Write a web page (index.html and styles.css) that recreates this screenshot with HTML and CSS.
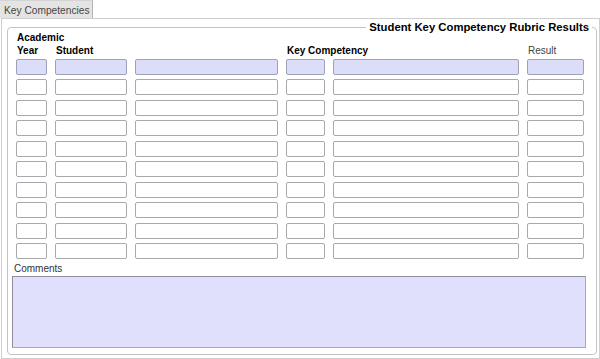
FILE: index.html
```html
<!DOCTYPE html>
<html lang="en">
<head>
    <meta charset="UTF-8">
    <title>Key Competencies</title>
    <link rel="stylesheet" href="styles.css">
</head>
<body>
    <div class="tabs">
        <div class="tab">Key Competencies</div>
    </div>
    <div class="panel">
        <fieldset class="results">
            <legend>Student Key Competency Rubric Results</legend>
            <div class="grid heads">
                <div class="head">Academic<br>Year</div>
                <div class="head">Student</div>
                <div></div>
                <div class="head wide">Key Competency</div>
                <div class="head plain">Result</div>
            </div>
            <div class="grid rows">
                <input class="filled"><input class="filled"><input class="filled"><input class="filled"><input class="filled"><input class="filled">
                <input><input><input><input><input><input>
                <input><input><input><input><input><input>
                <input><input><input><input><input><input>
                <input><input><input><input><input><input>
                <input><input><input><input><input><input>
                <input><input><input><input><input><input>
                <input><input><input><input><input><input>
                <input><input><input><input><input><input>
                <input><input><input><input><input><input>
            </div>
            <div class="label">Comments</div>
            <textarea class="comments"></textarea>
        </fieldset>
    </div>
</body>
</html>
```

FILE: styles.css
```css
body {
    margin: 0;
    font-family: "Liberation Sans", Arial, sans-serif;
    font-size: 10px;
    color: #000;
    background: #fff;
}
.tabs {
    display: flex;
    height: 18px;
}
.tab {
    box-sizing: border-box;
    width: 93px;
    height: 18px;
    padding: 2px 0 0 4px;
    line-height: 15px;
    font-size: 10.2px;
    color: #444;
    background: #e4e4e4;
    border-top: 1px solid #d4d4d4;
    border-right: 1px solid #b4b4b4;
}
.panel {
    box-sizing: border-box;
    width: 599px;
    height: 341px;
    margin-left: 1px;
    border: 1px solid #cfcfcf;
}
.results {
    margin: 4px 2px 0 5px;
    padding: 0 9px 6px 4px;
    border: 1px solid #c4c4c4;
    border-radius: 4px;
}
.results legend {
    margin-left: auto;
    margin-right: -5px;
    padding: 0 3px;
    font-size: 11.3px;
    font-weight: bold;
    line-height: 8px;
}
.grid {
    display: grid;
    grid-template-columns: 31px 72px 143px 39px 186px 57px;
    column-gap: 8px;
    margin-left: 4px;
}
.heads {
    align-items: end;
    height: 26px;
    margin-bottom: 2px;
}
.head {
    padding-left: 1px;
    font-weight: bold;
    line-height: 13px;
    white-space: nowrap;
}
.head.wide {
    grid-column: span 2;
}
.head.plain {
    font-weight: normal;
    color: #444;
}
.rows {
    row-gap: 4.44px;
}
.rows input {
    box-sizing: border-box;
    height: 16px;
    margin: 0;
    padding: 0 2px;
    border: 1px solid #a9a9ad;
    border-radius: 2px;
    background: #fff;
    font: inherit;
}
.rows input.filled {
    background: #dcdef9;
    border-color: #9ea2b6;
}
.label {
    margin-top: 3px;
    padding-left: 2px;
    line-height: 13px;
    color: #333;
}
.comments {
    display: block;
    box-sizing: border-box;
    width: 574px;
    height: 72px;
    margin: 1px 0 0;
    padding: 2px;
    border: 1px solid #a8a8b8;
    border-top-color: #8e8e9c;
    border-left-color: #8e8e9c;
    border-radius: 0;
    background: #e0e0fc;
    resize: none;
    font: inherit;
}
```
